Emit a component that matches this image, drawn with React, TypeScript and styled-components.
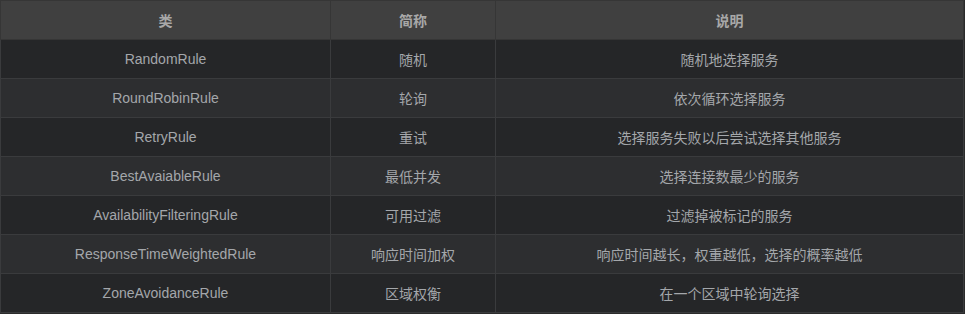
import React from "react";
import styled, { createGlobalStyle } from "styled-components";

const Global = createGlobalStyle`
  html, body { margin: 0; padding: 0; background: #2b2b2b; }
  body { font-family: "Liberation Sans", Arial, "Noto Sans CJK SC", sans-serif; }
`;

const Wrap = styled.div`
  width: 965px;
  height: 314px;
  overflow: hidden;
  background: #2b2b2b;
`;

const Table = styled.table`
  width: 963px;
  border-collapse: collapse;
  table-layout: fixed;
  font-size: 14px;
  color: #a4a7ab;
`;

const HeadCell = styled.th`
  height: 38px;
  padding: 0;
  background: #404040;
  border: 1px solid #363636;
  color: #a8a8a8;
  font-weight: bold;
  text-align: center;
`;

const Row = styled.tr<{ $alt: boolean }>`
  background: ${(p) => (p.$alt ? "#2d2e30" : "#252628")};
`;

const Cell = styled.td`
  height: 38px;
  padding: 0;
  border: 1px solid #3a3b3d;
  text-align: center;
  white-space: nowrap;
`;

const rows: [string, string, string][] = [
  ["RandomRule", "随机", "随机地选择服务"],
  ["RoundRobinRule", "轮询", "依次循环选择服务"],
  ["RetryRule", "重试", "选择服务失败以后尝试选择其他服务"],
  ["BestAvaiableRule", "最低并发", "选择连接数最少的服务"],
  ["AvailabilityFilteringRule", "可用过滤", "过滤掉被标记的服务"],
  ["ResponseTimeWeightedRule", "响应时间加权", "响应时间越长，权重越低，选择的概率越低"],
  ["ZoneAvoidanceRule", "区域权衡", "在一个区域中轮询选择"],
];

export default function App() {
  return (
    <Wrap>
      <Global />
      <Table>
        <colgroup>
          <col style={{ width: 330 }} />
          <col style={{ width: 165 }} />
          <col style={{ width: 468 }} />
        </colgroup>
        <thead>
          <tr>
            <HeadCell>类</HeadCell>
            <HeadCell>简称</HeadCell>
            <HeadCell>说明</HeadCell>
          </tr>
        </thead>
        <tbody>
          {rows.map((r, i) => (
            <Row key={r[0]} $alt={i % 2 === 1}>
              <Cell>{r[0]}</Cell>
              <Cell>{r[1]}</Cell>
              <Cell>{r[2]}</Cell>
            </Row>
          ))}
        </tbody>
      </Table>
    </Wrap>
  );
}
